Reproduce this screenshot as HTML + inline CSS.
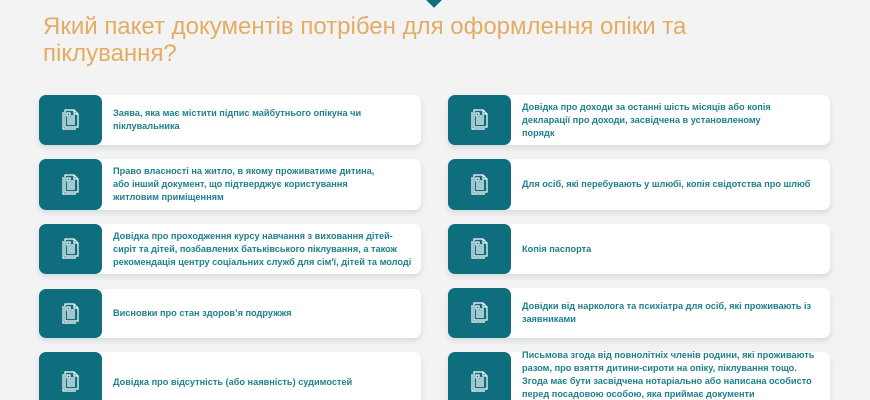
<!DOCTYPE html>
<html><head><meta charset="utf-8"><style>
html,body{margin:0;width:870px;height:400px;overflow:hidden}
body{background:#f3f3f3;position:relative;font-family:"Liberation Sans",sans-serif}
.dia{position:absolute;left:427px;top:-9px;width:14px;height:14px;background:#0e6e7d;transform:rotate(45deg)}
h1{position:absolute;left:43px;top:13px;margin:0;font-weight:normal;font-size:24px;line-height:27px;color:#e2ad62;width:760px}
.card{position:absolute;width:382px;background:#fff;border-radius:7px;box-shadow:0 3px 6px rgba(0,60,70,.12);display:flex;align-items:center}
.ic{position:absolute;left:0;top:0;bottom:0;width:63px;background:#0e6e7d;border-radius:7px;display:flex;align-items:center;justify-content:center}
.t{margin-left:74px;width:300px;font-size:9.2px;line-height:13px;color:#1f7f8e;font-weight:bold}
</style></head><body>
<div class="dia"></div>
<h1>Який пакет документів потрібен для оформлення опіки та піклування?</h1>
<svg width="0" height="0" style="position:absolute"><defs><g id="doc" fill="none" stroke="#fff" stroke-width="1.2"><path d="M3 4v17h13"/><path d="M5 2h9l4 4v13H5z"/><path d="M14 2v4h4"/><rect x="7" y="5" width="3" height="3"/><path d="M11 8h4M7 10h8M7 12h8M7 14h8M7 16h8"/></g></defs></svg>
<div class="card" style="left:39px;top:95px;height:50px"><div class="ic"><svg width="22" height="24"><use href="#doc"/></svg></div><div class="t">Заява, яка має містити підпис майбутнього опікуна чи<br>піклувальника</div></div>
<div class="card" style="left:39px;top:159px;height:51px"><div class="ic"><svg width="22" height="24"><use href="#doc"/></svg></div><div class="t">Право власності на житло, в якому проживатиме дитина,<br>або інший документ, що підтверджує користування<br>житловим приміщенням</div></div>
<div class="card" style="left:39px;top:224px;height:50px"><div class="ic"><svg width="22" height="24"><use href="#doc"/></svg></div><div class="t">Довідка про проходження курсу навчання з виховання дітей-<br>сиріт та дітей, позбавлених батьківського піклування, а також<br>рекомендація центру соціальних служб для сім'ї, дітей та молоді</div></div>
<div class="card" style="left:39px;top:289px;height:49px"><div class="ic"><svg width="22" height="24"><use href="#doc"/></svg></div><div class="t">Висновки про стан здоров’я подружжя</div></div>
<div class="card" style="left:39px;top:352px;height:60px"><div class="ic"><svg width="22" height="24"><use href="#doc"/></svg></div><div class="t">Довідка про відсутність (або наявність) судимостей</div></div>
<div class="card" style="left:448px;top:95px;height:50px"><div class="ic"><svg width="22" height="24"><use href="#doc"/></svg></div><div class="t">Довідка про доходи за останні шість місяців або копія<br>декларації про доходи, засвідчена в установленому<br>порядк</div></div>
<div class="card" style="left:448px;top:159px;height:51px"><div class="ic"><svg width="22" height="24"><use href="#doc"/></svg></div><div class="t">Для осіб, які перебувають у шлюбі, копія свідотства про шлюб</div></div>
<div class="card" style="left:448px;top:224px;height:50px"><div class="ic"><svg width="22" height="24"><use href="#doc"/></svg></div><div class="t">Копія паспорта</div></div>
<div class="card" style="left:448px;top:288px;height:50px"><div class="ic"><svg width="22" height="24"><use href="#doc"/></svg></div><div class="t">Довідки від нарколога та психіатра для осіб, які проживають із<br>заявниками</div></div>
<div class="card" style="left:448px;top:352px;height:60px"><div class="ic"><svg width="22" height="24"><use href="#doc"/></svg></div><div class="t" style="margin-top:-14px">Письмова згода від повнолітніх членів родини, які проживають<br>разом, про взяття дитини-сироти на опіку, піклування тощо.<br>Згода має бути засвідчена нотаріально або написана особисто<br>перед посадовою особою, яка приймає документи</div></div>
</body></html>
